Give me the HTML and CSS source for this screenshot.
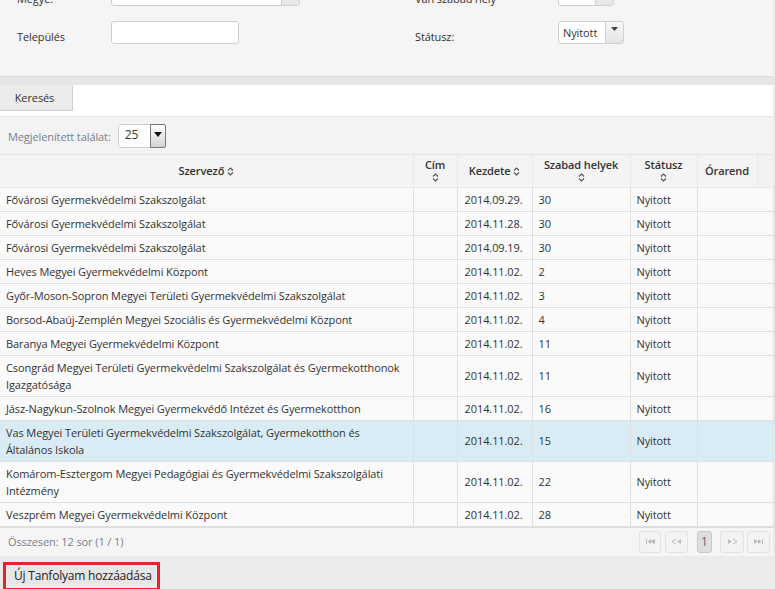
FILE: index.html
```html
<!DOCTYPE html>
<html lang="hu">
<head>
<meta charset="utf-8">
<title>Tanfolyamok</title>
<link rel="stylesheet" href="styles.css">
</head>
<body>
<div class="page">
  <section class="filter">
    <label class="flabel">Megye:</label>
    <div class="fselect wide"><span class="fval"></span><span class="fbtn"></span></div>
    <label class="flabel">Van szabad hely</label>
    <div class="fselect small"><span class="fval">-</span><span class="fbtn"></span></div>

    <label class="flabel">Település</label>
    <div class="ftext"></div>
    <label class="flabel">Státusz:</label>
    <div class="fselect status"><span class="fval">Nyitott</span><span class="fbtn"><svg width="7" height="4" viewBox="0 0 7 4"><path d="M0 0h7L3.5 4z" fill="#444"/></svg></span></div>
  </section>
  <div class="band"></div>
  <div class="searchbar"><button class="btn-search">Keresés</button></div>

  <div class="datatable">
    <div class="dt-top">
      <span class="dt-label">Megjelenített találat:</span>
      <div class="rows-select"><span class="rs-val">25</span><span class="rs-btn"><svg width="8" height="5" viewBox="0 0 8 5"><path d="M0 0h8L4 5z" fill="#111"/></svg></span></div>
    </div>
    <table class="grid">
      <colgroup>
        <col class="c-org"><col class="c-cim"><col class="c-date"><col class="c-free"><col class="c-stat"><col class="c-ora"><col class="c-sp">
      </colgroup>
      <thead>
        <tr>
          <th>Szervező <svg class="sort" width="7" height="9" viewBox="0 0 7 9"><path d="M1 3.5L3.5 1L6 3.5M1 5.5L3.5 8L6 5.5" fill="none" stroke="#555" stroke-width="1.2"/></svg></th>
          <th>Cím<br><svg class="sort" width="7" height="9" viewBox="0 0 7 9"><path d="M1 3.5L3.5 1L6 3.5M1 5.5L3.5 8L6 5.5" fill="none" stroke="#555" stroke-width="1.2"/></svg></th>
          <th>Kezdete <svg class="sort" width="7" height="9" viewBox="0 0 7 9"><path d="M1 3.5L3.5 1L6 3.5M1 5.5L3.5 8L6 5.5" fill="none" stroke="#555" stroke-width="1.2"/></svg></th>
          <th>Szabad helyek<br><svg class="sort" width="7" height="9" viewBox="0 0 7 9"><path d="M1 3.5L3.5 1L6 3.5M1 5.5L3.5 8L6 5.5" fill="none" stroke="#555" stroke-width="1.2"/></svg></th>
          <th>Státusz<br><svg class="sort" width="7" height="9" viewBox="0 0 7 9"><path d="M1 3.5L3.5 1L6 3.5M1 5.5L3.5 8L6 5.5" fill="none" stroke="#555" stroke-width="1.2"/></svg></th>
          <th>Órarend</th>
          <th class="spacer"></th>
        </tr>
      </thead>
      <tbody>
        <tr><td>Fővárosi Gyermekvédelmi Szakszolgálat</td><td></td><td class="date">2014.09.29.</td><td>30</td><td>Nyitott</td><td colspan="2"></td></tr>
        <tr><td>Fővárosi Gyermekvédelmi Szakszolgálat</td><td></td><td class="date">2014.11.28.</td><td>30</td><td>Nyitott</td><td colspan="2"></td></tr>
        <tr><td>Fővárosi Gyermekvédelmi Szakszolgálat</td><td></td><td class="date">2014.09.19.</td><td>30</td><td>Nyitott</td><td colspan="2"></td></tr>
        <tr><td>Heves Megyei Gyermekvédelmi Központ</td><td></td><td class="date">2014.11.02.</td><td>2</td><td>Nyitott</td><td colspan="2"></td></tr>
        <tr><td>Győr-Moson-Sopron Megyei Területi Gyermekvédelmi Szakszolgálat</td><td></td><td class="date">2014.11.02.</td><td>3</td><td>Nyitott</td><td colspan="2"></td></tr>
        <tr><td>Borsod-Abaúj-Zemplén Megyei Szociális és Gyermekvédelmi Központ</td><td></td><td class="date">2014.11.02.</td><td>4</td><td>Nyitott</td><td colspan="2"></td></tr>
        <tr><td>Baranya Megyei Gyermekvédelmi Központ</td><td></td><td class="date">2014.11.02.</td><td>11</td><td>Nyitott</td><td colspan="2"></td></tr>
        <tr><td>Csongrád Megyei Területi Gyermekvédelmi Szakszolgálat és Gyermekotthonok Igazgatósága</td><td></td><td class="date">2014.11.02.</td><td>11</td><td>Nyitott</td><td colspan="2"></td></tr>
        <tr><td>Jász-Nagykun-Szolnok Megyei Gyermekvédő Intézet és Gyermekotthon</td><td></td><td class="date">2014.11.02.</td><td>16</td><td>Nyitott</td><td colspan="2"></td></tr>
        <tr class="hl"><td>Vas Megyei Területi Gyermekvédelmi Szakszolgálat, Gyermekotthon és Általános Iskola</td><td></td><td class="date">2014.11.02.</td><td>15</td><td>Nyitott</td><td colspan="2"></td></tr>
        <tr><td>Komárom-Esztergom Megyei Pedagógiai és Gyermekvédelmi Szakszolgálati Intézmény</td><td></td><td class="date">2014.11.02.</td><td>22</td><td>Nyitott</td><td colspan="2"></td></tr>
        <tr><td>Veszprém Megyei Gyermekvédelmi Központ</td><td></td><td class="date">2014.11.02.</td><td>28</td><td>Nyitott</td><td colspan="2"></td></tr>
      </tbody>
    </table>
    <div class="dt-footer">
      <span class="total">Összesen: 12 sor (1 / 1)</span>
      <div class="pager">
        <span class="pg pg-first"><svg width="9" height="5" viewBox="0 0 9 5"><path d="M0.5 0v5" stroke="#bbb"/><path d="M9 0v5L4 2.5z" fill="#bbb"/><path d="M5 0v5L1.5 2.5z" fill="#bbb"/></svg></span>
        <span class="pg pg-prev"><svg width="9" height="5" viewBox="0 0 9 5"><path d="M4 0L0 2.5L4 5" fill="none" stroke="#bbb"/><path d="M9 0v5L5 2.5z" fill="#bbb"/></svg></span>
        <span class="pg active">1</span>
        <span class="pg pg-next"><svg width="9" height="5" viewBox="0 0 9 5"><path d="M0 0v5L4 2.5z" fill="#bbb"/><path d="M5 0L9 2.5L5 5" fill="none" stroke="#bbb"/></svg></span>
        <span class="pg pg-last"><svg width="9" height="5" viewBox="0 0 9 5"><path d="M0 0v5L4 2.5z" fill="#bbb"/><path d="M4 0v5L7.5 2.5z" fill="#bbb"/><path d="M8.5 0v5" stroke="#bbb"/></svg></span>
      </div>
    </div>
  </div>

  <div class="bottom">
    <div class="mark"><button class="btn-add">Új Tanfolyam hozzáadása</button></div>
  </div>
</div>
</body>
</html>
```

FILE: styles.css
```css
html, body {
  margin: 0;
  padding: 0;
}
body {
  background: #ebebeb;
  font-family: "Open Sans", "DejaVu Sans", sans-serif;
  font-size: 11px;
  letter-spacing: -0.1px;
  color: #333;
  overflow: hidden;
}
.page {
  width: 775px;
  height: 589px;
  overflow: hidden;
}

/* filter panel */
.filter {
  margin-top: -28px;
  padding: 11px 0 32px 17px;
  width: 756px;
  background: #f5f5f5;
  border-bottom: 1px solid #dcdcdc;
  display: grid;
  grid-template-columns: 94px 304px 143px 1fr;
  grid-template-rows: 23px 23px;
  row-gap: 15px;
}
.flabel {
  padding-top: 7px;
  line-height: 17px;
  color: #333;
}
.fselect, .ftext {
  box-sizing: border-box;
  height: 23px;
  background: #fff;
  border: 1px solid #cfcfcf;
  border-radius: 3px;
  display: flex;
}
.ftext { width: 128px; }
.fselect.wide { width: 189px; }
.fselect.small { width: 56px; }
.fselect.status { width: 66px; }
.fval {
  flex: 1;
  padding-left: 4px;
  line-height: 21px;
  color: #333;
}
.fbtn {
  width: 18px;
  border-left: 1px solid #d0d0d0;
  background: linear-gradient(#f8f8f8, #e4e4e4);
  border-radius: 0 2px 2px 0;
  display: flex;
  align-items: flex-start;
  justify-content: center;
  padding-top: 5px;
  box-sizing: border-box;
}

.band {
  height: 8px;
  background: #e6e6e6;
}
.searchbar {
  height: 31px;
  background: #fff;
  border-bottom: 1px solid #e6e6e6;
  width: 773px;
}
.btn-search {
  display: block;
  width: 73px;
  height: 26px;
  margin: 0;
  padding: 0 3px 0 0;
  font-family: inherit;
  font-size: inherit;
  letter-spacing: inherit;
  color: #333;
  background: #ececec;
  border: 1px solid #cfcfcf;
  border-left: 0;
  border-top: 0;
}

/* datatable */
.datatable {
  width: 773px;
}
.dt-top {
  height: 37px;
  background: #f3f3f3;
  border-bottom: 1px solid #e4e4e4;
  display: flex;
  align-items: center;
  padding-left: 8px;
  gap: 7px;
}
.dt-label {
  color: #7a7e8c;
  padding-top: 2px;
}
.rows-select {
  box-sizing: border-box;
  height: 24px;
  width: 48px;
  background: #fff;
  border: 1px solid #cfcfcf;
  border-radius: 3px;
  display: flex;
  margin-top: 1px;
}
.rs-val {
  flex: 1;
  padding-left: 6px;
  line-height: 20px;
  font-size: 12px;
}
.rs-btn {
  width: 16px;
  border: 1px solid #777;
  border-radius: 0 2px 2px 0;
  background: linear-gradient(#fff, #d4d4d4);
  display: flex;
  justify-content: center;
  padding-top: 7px;
  box-sizing: border-box;
  margin: -1px -1px -1px 0;
}

table.grid {
  width: 773px;
  border-collapse: collapse;
  table-layout: fixed;
}
.c-org { width: 413px; }
.c-cim { width: 44px; }
.c-date { width: 75px; }
.c-free { width: 98px; }
.c-stat { width: 67px; }
.c-ora { width: 60px; }
.c-sp { width: 16px; }

.grid th {
  height: 32px;
  box-sizing: border-box;
  padding: 3px 4px;
  background: #f4f4f4;
  border: 1px solid #e9e9e9;
  border-top: 0;
  font-weight: 600;
  line-height: 12px;
  text-align: center;
  color: #333;
  vertical-align: middle;
}
.grid th:first-child { border-left: 0; }
.grid th.spacer { background: #f2f2f2; }
.sort {
  display: inline-block;
  vertical-align: -1px;
  margin-top: 2px;
}
.grid td {
  padding: 3px 6px;
  line-height: 17px;
  border: 1px solid #e0e0e0;
  background: #fafafa;
  color: #333;
  vertical-align: middle;
  overflow: hidden;
}
.grid td:first-child { border-left: 0; }
.grid td.date { text-align: right; padding-right: 9px; }
.grid tr.hl td { background: #d9ecf5; }

.dt-footer {
  height: 28px;
  background: #f5f5f5;
  border-top: 1px solid #dcdcdc;
  display: flex;
  align-items: center;
  justify-content: space-between;
  padding: 0 3px 0 8px;
}
.total { color: #7a7e8c; }
.pager {
  display: flex;
  align-items: center;
}
.pg {
  box-sizing: border-box;
  height: 22px;
  border: 1px solid #e2e2e2;
  border-radius: 3px;
  background: #f3f3f3;
  display: flex;
  align-items: center;
  justify-content: center;
}
.pg-first { width: 22px; }
.pg-prev { width: 23px; margin-left: 4px; }
.pg-next { width: 24px; margin-left: 8px; }
.pg-last { width: 23px; margin-left: 3px; }
.pg.active {
  width: 15px;
  margin-left: 9px;
  background: #dedede;
  border-color: #c8c8c8;
  color: #666;
  font-size: 12px;
}

.bottom {
  padding: 6px 0 0 3px;
}
.mark {
  display: inline-block;
  border: 3px solid #e5232b;
  padding: 2px 2px 4px 2px;
}
.btn-add {
  display: block;
  margin: 0;
  width: 147px;
  height: 17px;
  padding: 0 0 0 6px;
  text-align: left;
  white-space: nowrap;
  font-family: inherit;
  font-size: 12px;
  letter-spacing: -0.2px;
  color: #222;
  background: #e6e6e6;
  border: 0;
}
```
